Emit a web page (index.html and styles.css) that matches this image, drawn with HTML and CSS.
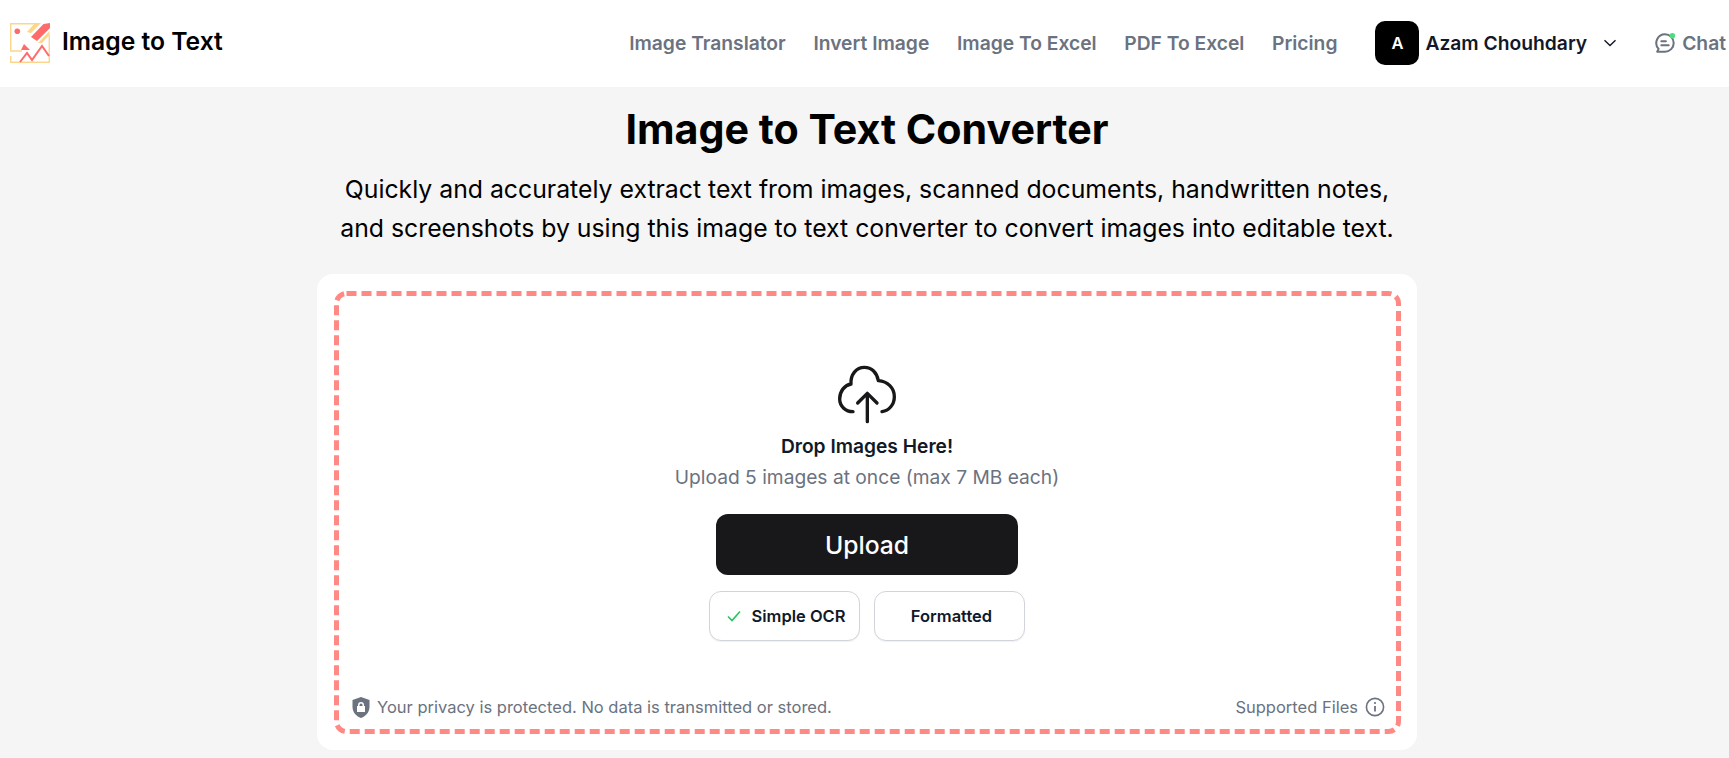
FILE: index.html
```html
<!DOCTYPE html>
<html lang="en">
<head>
  <meta charset="UTF-8">
  <meta name="viewport" content="width=device-width, initial-scale=1.0">
  <title>Image to Text Converter</title>
  <link rel="stylesheet" href="styles.css">
</head>
<body>
  <header class="site-header">
    <a class="brand" href="#">
      <svg class="brand-logo" viewBox="0 0 40 40" fill="none">
        <path d="M25 .7H.7V28H12M.7 33V39.3H39.3V12" stroke="#fdd58c" stroke-width="1.4"/>
        <path d="M25 0H31L21 10 17 9Z" fill="#fdd58c"/>
        <path d="M39.5 8V12L32 20H28Z" fill="#fdd58c"/>
        <path d="M33.5 1 40 0V5L27 18 21 14Z" fill="#ff6b6b"/>
        <circle cx="7.3" cy="8.3" r="2.8" fill="#ff6b6b"/>
        <path d="M14 21 20 27H11Z" fill="#ff6b6b"/>
        <path d="M10 39 17 30 22 37 32 23 39 33" stroke="#ff6b6b" stroke-width="2"/>
      </svg>
      <span class="brand-name">Image to Text</span>
    </a>
    <nav class="main-nav">
      <a href="#">Image Translator</a>
      <a href="#">Invert Image</a>
      <a href="#">Image To Excel</a>
      <a href="#">PDF To Excel</a>
      <a href="#">Pricing</a>
    </nav>
    <div class="user-menu">
      <span class="avatar">A</span>
      <span class="user-name">Azam Chouhdary</span>
      <svg class="chevron" viewBox="0 0 14 8" fill="none"><path d="M1.5 1.2 7 6.5 12.5 1.2" stroke="#111827" stroke-width="1.4"/></svg>
    </div>
    <a class="chat-link" href="#">
      <svg class="chat-icon" viewBox="0 0 24 24" fill="none">
        <path d="M12 2.5A9.5 9.5 0 1 1 12 21.5H3.5L5 18.4A9.5 9.5 0 0 1 12 2.5Z" stroke="#6b7280" stroke-width="2.2" stroke-linejoin="round"/>
        <path d="M8 10H13M8 14.5H16" stroke="#6b7280" stroke-width="2.2" stroke-linecap="round"/>
        <circle cx="20" cy="4" r="3" fill="#4ade80"/>
      </svg>
      <span>Chat</span>
    </a>
  </header>

  <main class="page">
    <h1>Image to Text Converter</h1>
    <p class="intro">Quickly and accurately extract text from images, scanned documents, handwritten notes,<br>and screenshots by using this image to text converter to convert images into editable text.</p>

    <section class="upload-card">
      <div class="dropzone">
        <svg class="dash-frame" viewBox="0 0 1067 443"><rect x="2.5" y="2.5" width="1062" height="438" rx="10" ry="10" fill="none" stroke="#ff8a85" stroke-width="5" stroke-dasharray="10 5"/></svg>
        <div class="drop-center">
          <svg class="cloud-icon" viewBox="470 40 180 180" fill="none" stroke="#18181b" stroke-width="10" stroke-linecap="round" stroke-linejoin="round">
            <path d="M518 183C495 183 478 166 478 145 478 122 492 104 512 100 510 72 528 50 552 50 574 50 590 66 594 90 622 92 642 112 642 138 642 162 626 180 605 183"/>
            <path d="M561 130V213M532 157 561 128 590 157"/>
          </svg>
          <p class="drop-title">Drop Images Here!</p>
          <p class="drop-hint">Upload 5 images at once (max 7 MB each)</p>
          <button class="upload-btn" type="button">Upload</button>
          <div class="mode-row">
            <button class="mode-btn" type="button">
              <svg class="check-icon" viewBox="0 0 14 12" fill="none"><path d="M1 6.5 5 10.5 13 1.5" stroke="#22c55e" stroke-width="1.6"/></svg>
              Simple OCR
            </button>
            <button class="mode-btn" type="button">Formatted</button>
          </div>
        </div>
        <div class="drop-footer">
          <span class="privacy">
            <svg class="shield-icon" viewBox="0 0 18 21"><path fill-rule="evenodd" d="M9 0 17.5 3V10C17.5 15 14 19 9 21 4 19 .5 15 .5 10V3ZM6 9V8A3 3 0 0 1 12 8V9H13V15H5V9ZM7.5 9H10.5V8A1.5 1.5 0 0 0 7.5 8Z" fill="#6b7280"/></svg>
            Your privacy is protected. No data is transmitted or stored.
          </span>
          <span class="supported">
            Supported Files
            <svg class="info-icon" viewBox="0 0 20 20" fill="none">
              <circle cx="10" cy="10" r="8.6" stroke="#6b7280" stroke-width="1.6"/>
              <path d="M10 9V14.5" stroke="#6b7280" stroke-width="1.8"/>
              <circle cx="10" cy="6" r="1.1" fill="#6b7280"/>
            </svg>
          </span>
        </div>
      </div>
    </section>
  </main>
</body>
</html>
```

FILE: styles.css
```css
* {
  margin: 0;
  padding: 0;
  box-sizing: border-box;
}

html, body {
  height: 100%;
  overflow: hidden;
}

body {
  font-family: 'Inter', sans-serif;
  background-color: #f5f5f5;
  color: #000;
}

a {
  color: inherit;
  text-decoration: none;
}

button {
  font-family: inherit;
  cursor: pointer;
}

.site-header {
  height: 87px;
  background-color: #fff;
  display: flex;
  align-items: center;
  padding: 0 3px 2px 10px;
}

.brand {
  display: flex;
  align-items: center;
  gap: 12px;
}

.brand-logo {
  width: 40px;
  height: 40px;
  margin-top: 1px;
}

.brand-name {
  padding-bottom: 3px;
  font-size: 24.7px;
  font-weight: 600;
}

.main-nav {
  display: flex;
  gap: 27.7px;
  margin-left: auto;
  font-size: 19.25px;
  font-weight: 600;
  color: #6b7280;
}

.user-menu {
  display: flex;
  align-items: center;
  margin-left: 38px;
}

.avatar {
  width: 44px;
  height: 44px;
  border-radius: 10px;
  background-color: #000;
  color: #fff;
  font-size: 16.5px;
  font-weight: 600;
  display: flex;
  align-items: center;
  justify-content: center;
}

.user-name {
  margin-left: 6px;
  font-size: 19.25px;
  font-weight: 600;
  color: #111827;
}

.chevron {
  width: 14px;
  height: 8px;
  margin-left: 16px;
}

.chat-link {
  display: flex;
  align-items: center;
  gap: 6px;
  margin-left: 37px;
  font-size: 19.25px;
  font-weight: 600;
  color: #6b7280;
}

.chat-icon {
  width: 22px;
  height: 22px;
}

.page {
  padding: 18px 0 0 5px;
  display: flex;
  flex-direction: column;
  align-items: center;
  text-align: center;
}

h1 {
  font-size: 41.2px;
  line-height: 48px;
  font-weight: 700;
}

.intro {
  margin-top: 17px;
  font-size: 24.8px;
  line-height: 39px;
}

.upload-card {
  width: 1100px;
  height: 476px;
  margin-top: 26px;
  padding: 17px 16px 16px 17px;
  background-color: #fff;
  border-radius: 16px;
}

.dropzone {
  position: relative;
  height: 100%;
  display: flex;
  flex-direction: column;
  align-items: center;
  padding: 73px 16px 15px;
}

.dash-frame {
  position: absolute;
  top: 0;
  left: 0;
  width: 100%;
  height: 100%;
  pointer-events: none;
}

.drop-center {
  flex: 1;
  display: flex;
  flex-direction: column;
  align-items: center;
  margin-right: 1px;
}

.cloud-icon {
  width: 60px;
  height: 60px;
}

.drop-title {
  margin-top: 8px;
  font-size: 19.2px;
  line-height: 28px;
  font-weight: 600;
  color: #111827;
}

.drop-hint {
  margin-top: 3px;
  font-size: 19.2px;
  line-height: 28px;
  color: #6b7280;
}

.upload-btn {
  width: 302px;
  height: 61px;
  margin-top: 23px;
  border: none;
  border-radius: 12px;
  background-color: #18181b;
  color: #fff;
  font-size: 24.7px;
  font-weight: 500;
}

.mode-row {
  display: flex;
  gap: 14px;
  margin-top: 16px;
}

.mode-btn {
  width: 151px;
  height: 50px;
  display: flex;
  align-items: center;
  justify-content: center;
  gap: 10px;
  padding-left: 4px;
  border: 1px solid #d1d5db;
  border-radius: 12px;
  background-color: #fff;
  box-shadow: 0 1px 1px rgba(0, 0, 0, 0.06);
  color: #111827;
  font-size: 16.5px;
  font-weight: 600;
}

.check-icon {
  width: 14px;
  height: 12px;
}

.drop-footer {
  width: 100%;
  display: flex;
  align-items: center;
  justify-content: space-between;
  padding-left: 2px;
  font-size: 16.5px;
  line-height: 24px;
  color: #6b7280;
}

.privacy, .supported {
  display: flex;
  align-items: center;
  gap: 7px;
}

.shield-icon {
  width: 18px;
  height: 21px;
}

.info-icon {
  width: 20px;
  height: 20px;
}
```
